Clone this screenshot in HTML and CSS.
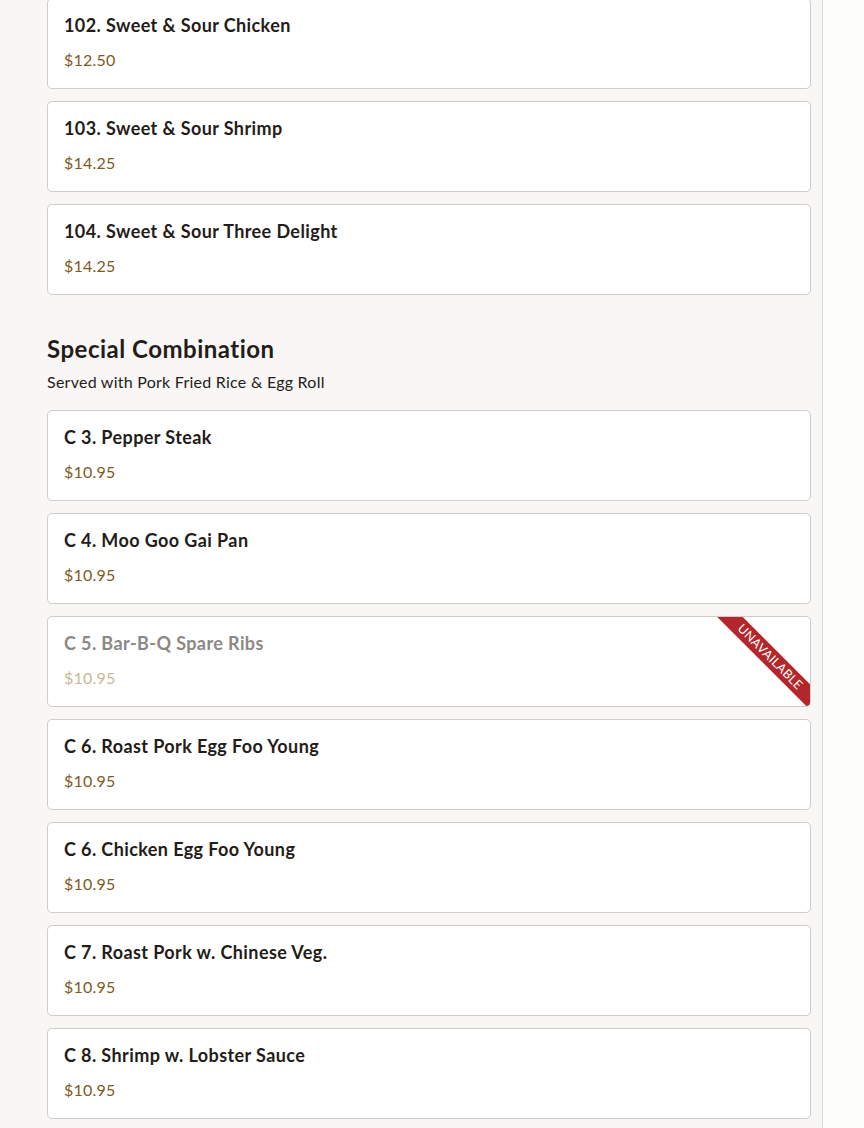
FILE: index.html
```html
<!DOCTYPE html>
<html lang="en">
<head>
<meta charset="utf-8">
<title>Menu</title>
<link rel="stylesheet" href="styles.css">
</head>
<body>
<div class="page">
  <main class="menu">
    <section class="section section-first">
      <div class="items">
        <div class="item"><div class="item-name">102. Sweet &amp; Sour Chicken</div><div class="item-price">$12.50</div></div>
        <div class="item"><div class="item-name">103. Sweet &amp; Sour Shrimp</div><div class="item-price">$14.25</div></div>
        <div class="item"><div class="item-name">104. Sweet &amp; Sour Three Delight</div><div class="item-price">$14.25</div></div>
      </div>
    </section>
    <section class="section">
      <h2 class="section-title">Special Combination</h2>
      <p class="section-desc">Served with Pork Fried Rice &amp; Egg Roll</p>
      <div class="items">
        <div class="item"><div class="item-name">C 3. Pepper Steak</div><div class="item-price">$10.95</div></div>
        <div class="item"><div class="item-name">C 4. Moo Goo Gai Pan</div><div class="item-price">$10.95</div></div>
        <div class="item item-unavailable"><div class="item-name">C 5. Bar-B-Q Spare Ribs</div><div class="item-price">$10.95</div><span class="ribbon">Unavailable</span></div>
        <div class="item"><div class="item-name">C 6. Roast Pork Egg Foo Young</div><div class="item-price">$10.95</div></div>
        <div class="item"><div class="item-name">C 6. Chicken Egg Foo Young</div><div class="item-price">$10.95</div></div>
        <div class="item"><div class="item-name">C 7. Roast Pork w. Chinese Veg.</div><div class="item-price">$10.95</div></div>
        <div class="item"><div class="item-name">C 8. Shrimp w. Lobster Sauce</div><div class="item-price">$10.95</div></div>
      </div>
    </section>
  </main>
  <aside class="side"></aside>
</div>
</body>
</html>
```
FILE: styles.css
```css
html, body {
  margin: 0;
  padding: 0;
  background: #fdfdfc;
  font-family: "Lato", "Noto Sans", sans-serif;
  color: #241c19;
}
.page {
  display: flex;
  height: 1128px;
  overflow: hidden;
}
.menu {
  box-sizing: border-box;
  width: 823px;
  flex: 0 0 823px;
  background: #f9f7f5;
  border-right: 1px solid #dcdad7;
  padding: 0 11px 0 47px;
}
.side {
  flex: 1;
  background: #fdfdfc;
}
.section-first {
  margin-top: -2px;
}
.section {
  margin-bottom: 38px;
}
.section-title {
  margin: 0;
  font-size: 24px;
  line-height: 32px;
  font-weight: 700;
  letter-spacing: 0.5px;
  color: #241c19;
}
.section-desc {
  margin: 7px 0 18px;
  font-size: 16px;
  line-height: 20px;
  letter-spacing: 0.25px;
  color: #241c19;
}
.items {
  display: flex;
  flex-direction: column;
  gap: 12px;
}
.item {
  position: relative;
  overflow: hidden;
  box-sizing: border-box;
  height: 91px;
  background: #ffffff;
  border: 1px solid #cfcdca;
  border-radius: 5px;
  padding: 14px 16px 0;
}
.item-name {
  font-size: 18px;
  line-height: 24px;
  font-weight: 700;
  letter-spacing: 0.4px;
  color: #241c19;
}
.item-price {
  margin-top: 12px;
  font-size: 16px;
  line-height: 22px;
  letter-spacing: 0.2px;
  color: #7d5a22;
}
.item-unavailable .item-name {
  color: #8c8886;
}
.item-unavailable .item-price {
  color: #c9b795;
}
.ribbon {
  position: absolute;
  top: 40px;
  right: 40px;
  width: 160px;
  height: 18px;
  margin-top: -9px;
  margin-right: -80px;
  transform: rotate(45deg);
  background: #b3262b;
  color: #ffffff;
  font-size: 12.5px;
  line-height: 18px;
  text-align: center;
  text-transform: uppercase;
  letter-spacing: 0.3px;
}
```
